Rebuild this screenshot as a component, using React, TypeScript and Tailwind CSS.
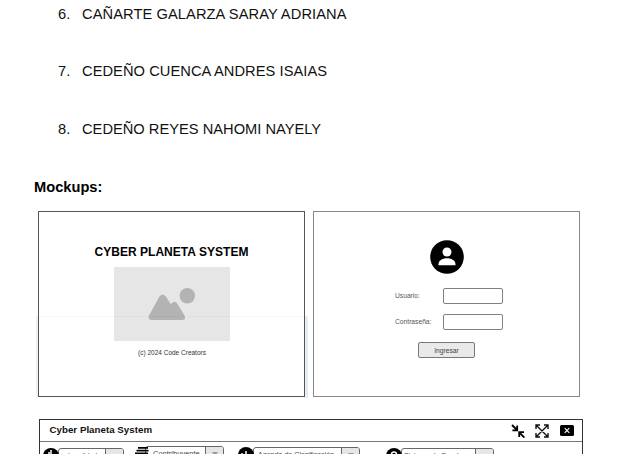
import type { ReactNode } from 'react';

const people = [
  { n: '6.', name: 'CAÑARTE GALARZA SARAY ADRIANA', row: 'h-[57px]', tracking: 'tracking-[0.08px]' },
  { n: '7.', name: 'CEDEÑO CUENCA ANDRES ISAIAS', row: 'h-[58px]', tracking: 'tracking-[0.06px]' },
  { n: '8.', name: 'CEDEÑO REYES NAHOMI NAYELY', row: 'h-[58px]', tracking: 'tracking-[0.01px]' },
];

function Field({ label }: { label: string }) {
  return (
    <div className="flex h-4 items-center">
      <span className="w-12 whitespace-nowrap text-[6.7px] text-[#555]">{label}</span>
      <span className="h-4 w-[60px] rounded-[2px] border border-[#808080] bg-white" />
    </div>
  );
}

function Menu({ icon, label, className, text }: { icon: ReactNode; label: string; className: string; text: string }) {
  return (
    <div className={`relative flex h-4 rounded-[3px] border border-[#666] bg-white ${className}`}>
      <span className="absolute -left-4 -top-px">{icon}</span>
      <span className={`flex-1 whitespace-nowrap pt-[2px] leading-[10px] text-[#444] ${text}`}>{label}</span>
      <span className="flex w-[18px] justify-center rounded-r-[2px] border-l border-[#666] bg-[#e6e6e6] pt-[5px]">
        <svg width="6" height="4" viewBox="0 0 6 4"><path d="M0 0h6L3 4z" fill="#999" /></svg>
      </span>
    </div>
  );
}

function Disc({ children }: { children: ReactNode }) {
  return (
    <svg width="16" height="16" viewBox="0 0 16 16" fill="none" stroke="#fff" strokeWidth="1.5">
      <circle cx="8" cy="8" r="8" fill="#000" stroke="none" />
      {children}
    </svg>
  );
}

export default function App() {
  return (
    <div className="relative h-[454px] w-[625px] overflow-hidden bg-white font-['Liberation_Sans',Arial,sans-serif] text-black">
      <div className="pt-[5px]">
        {people.map((p) => (
          <div key={p.n} className={`flex pl-[58px] text-[14.67px] leading-[18px] text-[#111] ${p.row}`}>
            <span className="w-6">{p.n}</span>
            <span className={`whitespace-nowrap ${p.tracking}`}>{p.name}</span>
          </div>
        ))}
      </div>
      <h1 className="h-[33px] pl-[34px] text-[14.67px] font-bold leading-[18px]">Mockups:</h1>

      <div className="flex items-start gap-[8px] pl-[38px]">
        <section className="relative flex h-[186px] w-[267px] flex-col items-center border border-[#555]">
          <div className="absolute -left-[3px] top-[104px] h-[82px] w-[2px] bg-[#f0f2f6]" />
          <div className="absolute -right-[4px] top-[104px] h-[82px] w-[3px] bg-[#e8edf4]" />
          <h2 className="mt-[32px] whitespace-nowrap text-[12px] font-bold leading-4 tracking-[0.04px]">CYBER PLANETA SYSTEM</h2>
          <svg className="mt-[7px]" width="116" height="74" viewBox="114 267 116 74">
            <path d="M114 267h116v74H114z" fill="#e6e6e6" />
            <circle cx="187.3" cy="295.7" r="7.7" fill="#b3b3b3" />
            <path d="M149.2 315.2 159 297.2Q162.7 292 166.4 297.2L170.8 304.2Q174.3 299.2 177.5 304L184.5 315.5Q186.5 320 182 320H152Q147 320 149.2 315.2Z" fill="#b3b3b3" />
          </svg>
          <p className="ml-px mt-[7px] whitespace-nowrap text-[6.5px] leading-[10px] text-[#333]">(c) 2024 Code Creators</p>
          <div className="absolute left-0 right-0 top-[104px] h-px bg-black/[0.03]" />
        </section>

        <section className="flex h-[186px] w-[267px] flex-col border border-[#888]">
          <svg className="ml-[116px] mt-[28px]" width="34" height="34" viewBox="0 0 34 34">
            <circle cx="17" cy="17" r="16.8" />
            <circle cx="17" cy="12" r="4.5" fill="#fff" />
            <path d="M8.5 25.3v-1c0-3.7 3.5-6.1 8.5-6.1s8.5 2.4 8.5 6.1v1z" fill="#fff" />
          </svg>
          <div className="ml-[81px] mt-[14px] flex flex-col gap-[10px]">
            <Field label="Usuario:" />
            <Field label="Contraseña:" />
          </div>
          <button className="ml-[104px] mt-[12px] h-4 w-[57px] rounded-[2px] border border-[#777] bg-[#e9e9e9] text-[6.7px] leading-[13px] text-[#444]">Ingresar</button>
        </section>
      </div>

      <section className="ml-[39px] mt-[22px] h-[60px] w-[544px] border border-[#333]">
        <header className="flex h-[22px] items-center border-b border-[#777] pl-[9.5px] pr-2">
          <h2 className="flex-1 text-[9.7px] font-bold tracking-[0.04px] text-[#111]">Cyber Planeta System</h2>
          <svg width="14" height="14" viewBox="0 0 14 14" fill="none" stroke="#000" strokeWidth="1.8">
            <path d="m1 1 4.5 4.5M6.2 1.6v4.8H1.4M13.4 13.6 8.9 9.1M8.2 13V8.2H13" />
          </svg>
          <svg className="ml-[10px]" width="14" height="14" viewBox="0 0 14 14" fill="none" stroke="#111" strokeWidth="1.4">
            <path d="m1.5 1.5 11 11m0-11-11 11M1 5V1h4M9 1h4v4M13 9v4H9M5 13H1V9" />
          </svg>
          <svg className="ml-[11px]" width="14" height="11" viewBox="0 0 14 11">
            <rect width="14" height="11" rx="1.5" />
            <path d="m4.7 3.2 4.6 4.6m0-4.6L4.7 7.8" stroke="#fff" strokeWidth="1.1" />
          </svg>
        </header>
        <nav className="flex items-start pl-[18px] pt-[5px]">
          <Menu className="mt-px w-[66px]" text="pl-[9px] text-[6.8px]" label="Localidad" icon={<Disc><path d="M8 2v7m0 0 3 3M8 9l-3 3M6 4v5" /></Disc>} />
          <Menu
            className="-mt-px ml-[21px] w-[79px]"
            text="pl-[7px] text-[7.5px]"
            label="Contribuyente"
            icon={
              <svg className="ml-[4px]" width="16" height="14" viewBox="0 0 16 14">
                <path d="M4 1h10v1.8H4zM2.5 3.7h12v1.8h-12zM1 6.5h13V14H1z" />
              </svg>
            }
          />
          <Menu className="ml-[29px] w-[107px]" text="pl-[4px] text-[7.1px]" label="Agenda de Clasificación" icon={<Disc><path d="M3 8h10M8 4v8M4 6v5" /></Disc>} />
          <Menu className="ml-[41px] mt-px w-[93px]" text="pl-[2px] text-[7.1px]" label="Sistema de Deudas" icon={<Disc><circle cx="8" cy="6.5" r="2.5" /></Disc>} />
        </nav>
      </section>
    </div>
  );
}
